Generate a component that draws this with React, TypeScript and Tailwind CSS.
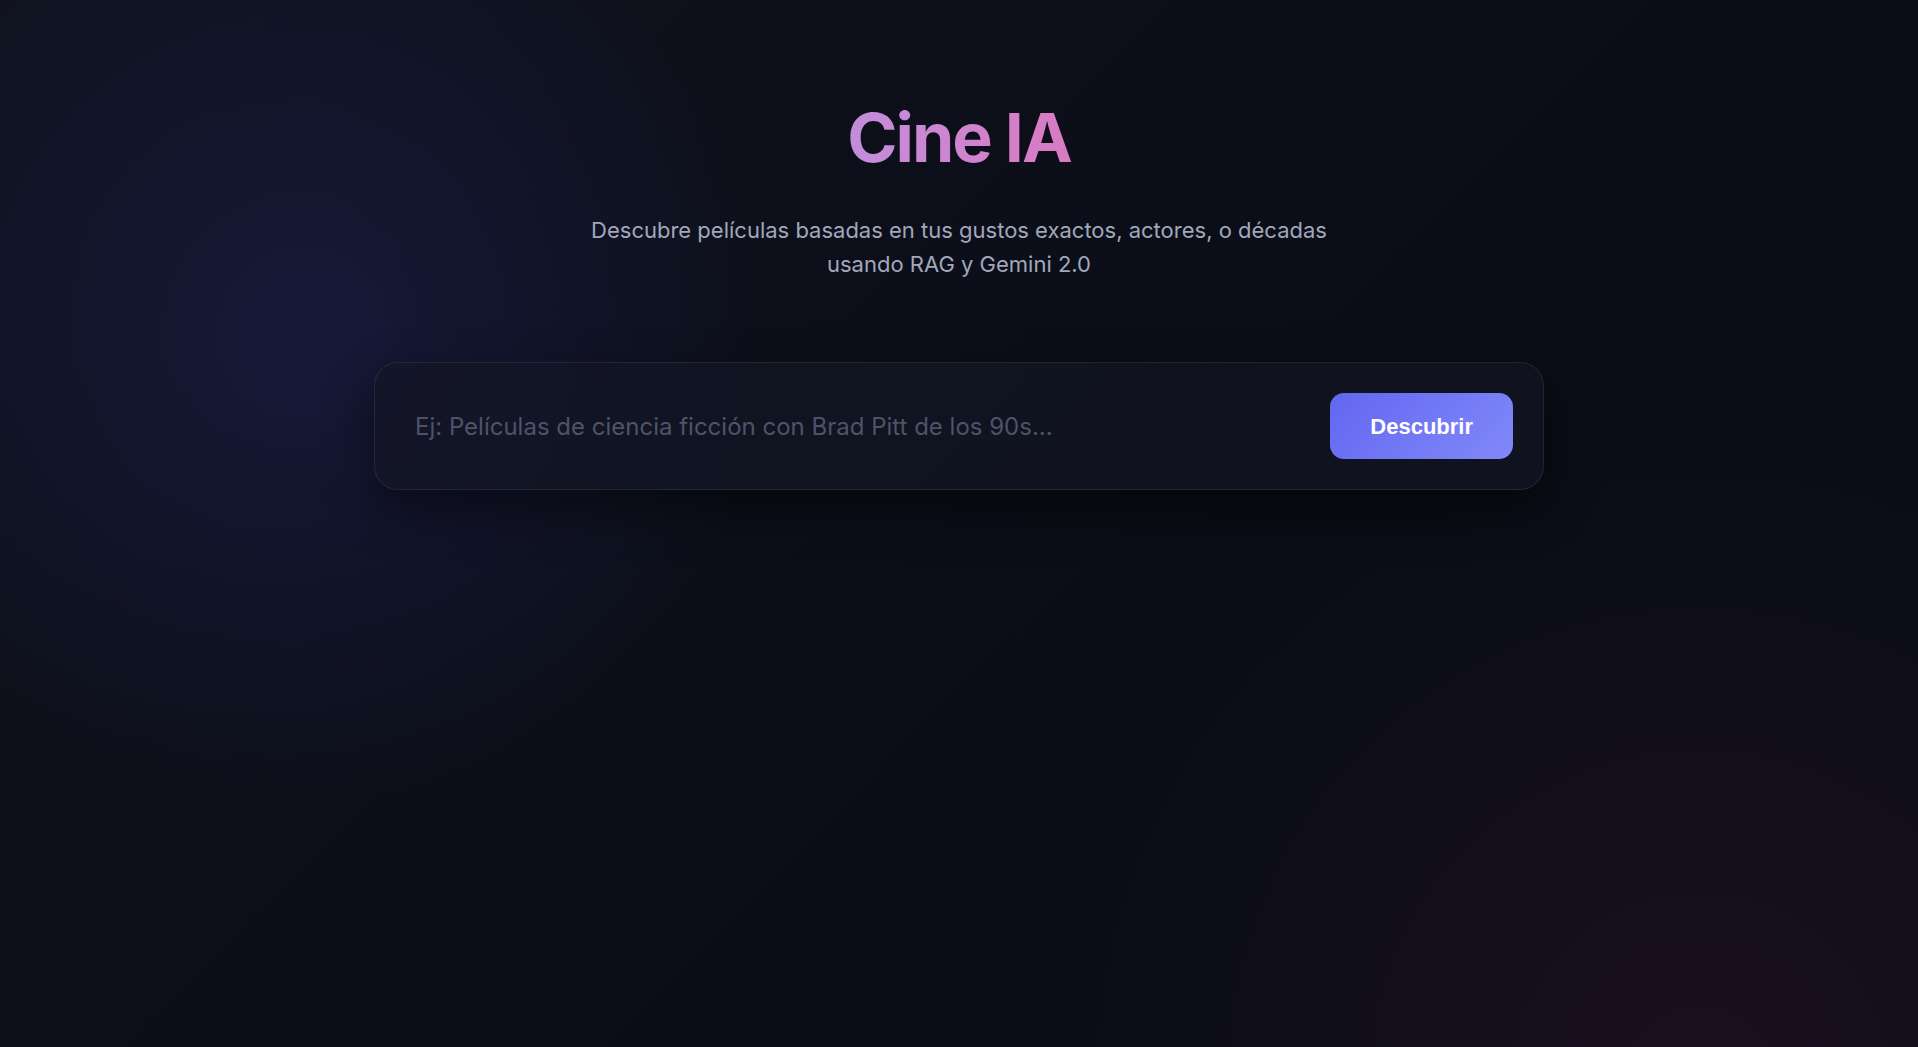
import React, { useState } from 'react';

// Page d'accueil : titre, sous-titre et barre de recherche
export default function App() {
  const [query, setQuery] = useState('');

  return (
    <div className="relative min-h-screen w-full overflow-hidden bg-[#0b0e17] bg-[radial-gradient(660px_circle_at_310px_340px,rgba(45,44,125,0.30),transparent_70%),radial-gradient(900px_circle_at_1700px_1080px,rgba(110,28,85,0.16),transparent_70%),linear-gradient(135deg,#10131f,#0a0d16_60%)] font-['Inter',sans-serif]">
      <div className="flex flex-col items-center pt-[103px]">
        <h1 className="bg-linear-to-r from-[#c28ddc] to-[#d97ac2] bg-clip-text text-[68px] font-bold leading-none tracking-[-0.03em] text-transparent">
          Cine IA
        </h1>

        <p className="mt-[42px] max-w-3xl text-center text-[22px] leading-[34px] text-[#a0a8ba]">
          Descubre películas basadas en tus gustos exactos, actores, o décadas usando RAG y Gemini 2.0
        </p>

        <form
          className="mt-[81px] flex w-[1170px] items-center gap-4 rounded-3xl border border-white/[0.08] bg-[#121524]/70 p-[30px] shadow-[0_20px_50px_rgba(0,0,0,0.45)]"
          onSubmit={(e) => e.preventDefault()}
        >
          <input
            type="text"
            value={query}
            onChange={(e) => setQuery(e.target.value)}
            placeholder="Ej: Películas de ciencia ficción con Brad Pitt de los 90s..."
            className="flex-1 bg-transparent px-[10px] pt-[2px] text-[24px] text-gray-200 outline-none placeholder:text-[#4b5469]"
          />
          <button
            type="submit"
            className="h-[66px] rounded-[14px] bg-linear-135 from-[#6366f1] to-[#8189f8] px-10 font-['Liberation_Sans',Arial,sans-serif] text-[22px] font-bold text-white"
          >
            Descubrir
          </button>
        </form>
      </div>
    </div>
  );
}
